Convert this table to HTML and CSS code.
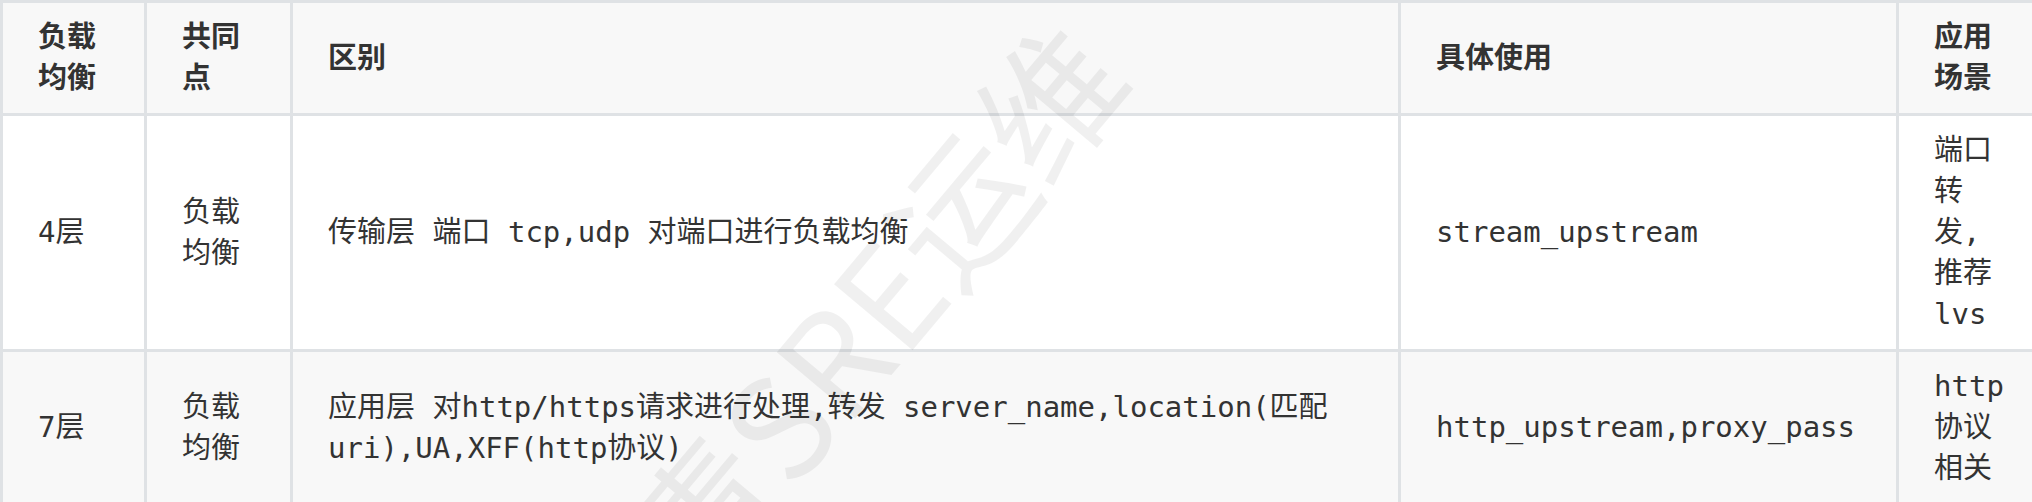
FILE: index.html
```html
<!DOCTYPE html>
<html lang="zh-CN">

<head>
  <meta charset="UTF-8">
  <meta name="viewport" content="width=device-width, initial-scale=1.0">
  <title>负载均衡</title>
  <link rel="stylesheet" href="styles.css">
</head>

<body>

  <div class="page">
    <table class="tb">
      <thead>
        <tr>
          <th class="c1">负载均衡</th>
          <th class="c2">共同点</th>
          <th class="c3">区别</th>
          <th class="c4">具体使用</th>
          <th class="c5">应用场景</th>
        </tr>
      </thead>
      <tbody>
        <tr>
          <td>4层</td>
          <td>负载均衡</td>
          <td>传输层 端口 tcp,udp 对端口进行负载均衡</td>
          <td>stream_upstream</td>
          <td>端口转发,推荐lvs</td>
        </tr>
        <tr>
          <td>7层</td>
          <td>负载均衡</td>
          <td>应用层 对http/https请求进行处理,转发 server_name,location(匹配uri),UA,XFF(http协议)</td>
          <td>http_upstream,proxy_pass</td>
          <td>http协议相关</td>
        </tr>
      </tbody>
    </table>

    <!-- 水印 -->
    <div class="mark">青SRE运维</div>
  </div>

</body>

</html>
```

FILE: styles.css
```css
* {
  margin: 0;
  padding: 0;
  box-sizing: border-box;
}

body {
  background: #fff;
  color: #333;
  font-family: "DejaVu Sans Mono", "Noto Sans CJK SC", monospace;
  font-size: 29px;
  line-height: 41px;
  overflow: hidden;
}

.page {
  position: relative;
  width: 2032px;
  height: 502px;
  overflow: hidden;
}

.tb {
  width: 2041px;
  table-layout: fixed;
  border-collapse: separate;
  border-spacing: 0;
}

.tb th,
.tb td {
  border-top: 3px solid #dfe2e5;
  border-left: 3px solid #dfe2e5;
  padding: 14px 35px;
  text-align: left;
  vertical-align: middle;
}

.tb th {
  font-weight: bold;
  background: #f8f8f8;
}

.tb tbody tr:nth-child(2) td {
  background: #f8f8f8;
}

.c1 { width: 144px; }
.c2 { width: 146px; }
.c3 { width: 1108px; }
.c4 { width: 498px; }
.c5 { width: 145px; }

/* 水印斜放在表格上面 */
.mark {
  position: absolute;
  left: 656px;
  top: 491px;
  font-family: "Noto Sans CJK SC", sans-serif;
  font-size: 140px;
  line-height: 1;
  color: rgba(0, 0, 0, 0.06);
  white-space: nowrap;
  transform: rotate(-50deg);
  transform-origin: left center;
  pointer-events: none;
}
```
